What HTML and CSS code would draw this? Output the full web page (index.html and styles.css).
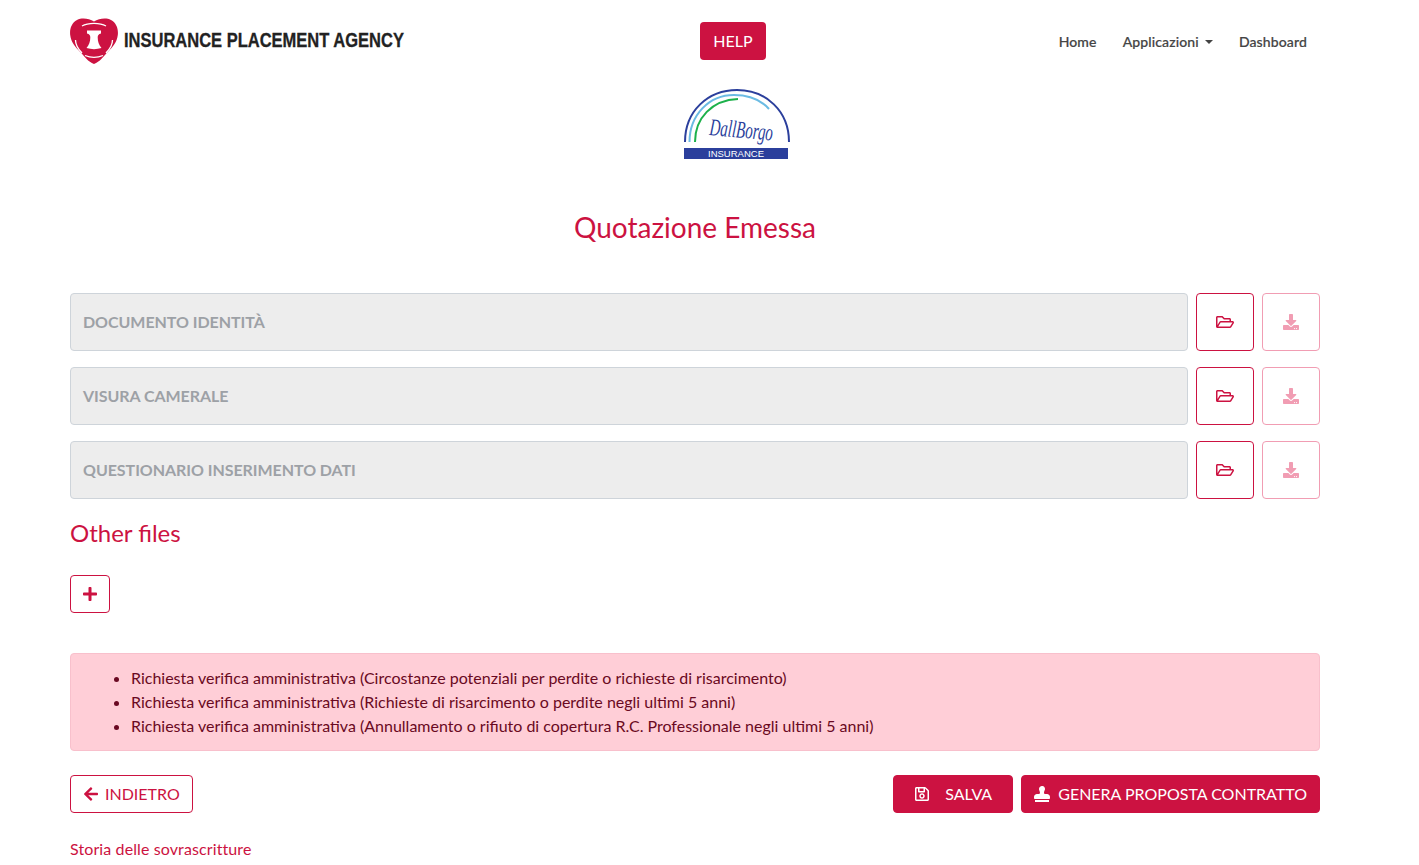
FILE: index.html
```html
<!DOCTYPE html>
<html lang="it">
<head>
<meta charset="utf-8">
<title>Quotazione Emessa</title>
<link rel="stylesheet" href="styles.css">
</head>
<body>
<svg class="defs" aria-hidden="true">
  <symbol id="i-folder" viewBox="0 0 576 512"><path d="M527.9 224H480v-48c0-26.5-21.5-48-48-48H272l-64-64H48C21.5 64 0 85.5 0 112v288c0 26.5 21.5 48 48 48h400c16.5 0 31.9-8.5 40.7-22.6l79.9-128c20-31.9-3-73.4-40.7-73.4zM48 118c0-3.3 2.7-6 6-6h134.1l64 64H426c3.3 0 6 2.7 6 6v42H152c-16.8 0-32.4 8.8-41.1 23.2L48 351.4zm400 282H72l77.2-128H528z"/></symbol>
  <symbol id="i-download" viewBox="0 0 512 512"><path d="M216 0h80c13.3 0 24 10.7 24 24v168h87.7c17.8 0 26.7 21.5 14.1 34.1L269.7 378.3c-7.5 7.5-19.8 7.5-27.3 0L90.1 226.1c-12.6-12.6-3.7-34.1 14.1-34.1H192V24c0-13.3 10.7-24 24-24zm296 376v112c0 13.3-10.7 24-24 24H24c-13.3 0-24-10.7-24-24V376c0-13.3 10.7-24 24-24h146.7l49 49c20.1 20.1 52.5 20.1 72.6 0l49-49H488c13.3 0 24 10.7 24 24zm-124 88c0-11-9-20-20-20s-20 9-20 20 9 20 20 20 20-9 20-20zm64 0c0-11-9-20-20-20s-20 9-20 20 9 20 20 20 20-9 20-20z"/></symbol>
  <symbol id="i-plus" viewBox="0 0 448 512"><path d="M416 208H272V64c0-17.67-14.33-32-32-32h-32c-17.67 0-32 14.33-32 32v144H32c-17.67 0-32 14.33-32 32v32c0 17.67 14.33 32 32 32h144v144c0 17.67 14.33 32 32 32h32c17.67 0 32-14.33 32-32V304h144c17.67 0 32-14.33 32-32v-32c0-17.67-14.33-32-32-32z"/></symbol>
  <symbol id="i-arrow" viewBox="0 0 448 512"><path d="M257.5 445.1l-22.2 22.2c-9.4 9.4-24.6 9.4-33.9 0L7 273c-9.4-9.4-9.4-24.6 0-33.9L201.4 44.7c9.4-9.4 24.6-9.4 33.9 0l22.2 22.2c9.5 9.5 9.3 25-.4 34.3L136.6 216H424c13.3 0 24 10.7 24 24v32c0 13.3-10.7 24-24 24H136.6l120.5 114.8c9.8 9.3 10 24.8.4 34.3z"/></symbol>
  <symbol id="i-save" viewBox="0 0 448 512"><path d="M433.941 129.941l-83.882-83.882A48 48 0 0 0 316.118 32H48C21.49 32 0 53.49 0 80v352c0 26.51 21.49 48 48 48h352c26.51 0 48-21.49 48-48V163.882a48 48 0 0 0-14.059-33.941zM272 80v80H144V80h128zm122 352H54a6 6 0 0 1-6-6V86a6 6 0 0 1 6-6h42v104c0 13.255 10.745 24 24 24h176c13.255 0 24-10.745 24-24V83.882l78.243 78.243a6 6 0 0 1 1.757 4.243V426a6 6 0 0 1-6 6zM224 232c-48.523 0-88 39.477-88 88s39.477 88 88 88 88-39.477 88-88-39.477-88-88-88zm0 128c-22.056 0-40-17.944-40-40s17.944-40 40-40 40 17.944 40 40-17.944 40-40 40z"/></symbol>
  <symbol id="i-stamp" viewBox="0 0 512 512"><path d="M32 512h448v-64H32v64zm384-256h-66.56c-16.26 0-29.44-13.18-29.44-29.44v-9.46c0-27.37 8.88-53.42 21.46-77.73 9.11-17.61 12.9-38.38 9.05-60.42-6.77-38.78-38.47-70.7-77.26-77.45C212.62-9.04 160 37.33 160 96c0 14.16 3.12 27.54 8.69 39.58C182.02 164.43 192 194.7 192 226.49v.07c0 16.26-13.18 29.44-29.44 29.44H96c-53.02 0-96 42.98-96 96v32c0 17.67 14.33 32 32 32h448c17.67 0 32-14.33 32-32v-32c0-53.02-42.98-96-96-96z"/></symbol>
</svg>

<div class="page">
  <header class="topbar">
    <a class="brand" href="#">
      <svg class="brand-mark" viewBox="0 0 48 46">
        <path class="mark-red" d="M24 3.500C19 .5 12 -.5 7 2 1.500 5 -.5 11 .2 17c.8 7 5 12 10 17 4 4 8 10 13.800 12 5.800-2 9.800-8 13.800-12 5-5 9.200-10 10-17 .7-6-1.300-12-6.800-15-5-2.500-12-1.500-17 1.500z"/>
        <path class="mark-white" d="M17 12.500h14v3c-2.500 .5-3.300 2-3.300 4 0 4 1.300 7.500 3.800 10.500-5 1.500-10 1.500-15 0 2.500-3 3.800-6.500 3.800-10.500 0-2-.8-3.500-3.300-4z"/>
        <path class="mark-line" d="M12 8c6-3.500 18-3.500 24 0M5.500 22c0 5 2.500 9 6.500 13M42.500 22c0 5-2.500 9-6.500 13M15 37.500c6 2.500 12 2.500 18 0"/>
      </svg>
      <span class="brand-name">INSURANCE PLACEMENT AGENCY</span>
    </a>
    <a class="help" href="#">HELP</a>
    <nav class="nav">
      <a href="#">Home</a>
      <a href="#" class="caret">Applicazioni</a>
      <a href="#">Dashboard</a>
    </nav>
  </header>

  <div class="partner">
    <svg class="partner-logo" viewBox="0 0 106 72">
      <path class="arc-blue" d="M1 54C1 23 24 2 53 2s52 21 52 52"/>
      <path class="arc-sky" d="M5.500 54C5.500 27 25 7 50 7c15 0 27 5 35 14"/>
      <path class="arc-green" d="M11 54C11 30 28 12 54 11"/>
      <text class="script" transform="translate(25 47) rotate(5) scale(1 1.600)">DallBorgo</text>
      <rect class="bar" x="0" y="60" width="104" height="11"/>
      <text class="bar-text" x="52" y="69" text-anchor="middle">INSURANCE</text>
    </svg>
  </div>

  <h1 class="title">Quotazione Emessa</h1>

  <section class="files">
    <div class="file-row">
      <div class="file-name">DOCUMENTO IDENTITÀ</div>
      <button class="square"><svg class="ic-folder"><use href="#i-folder"/></svg></button>
      <button class="square off"><svg class="ic-down"><use href="#i-download"/></svg></button>
    </div>
    <div class="file-row">
      <div class="file-name">VISURA CAMERALE</div>
      <button class="square"><svg class="ic-folder"><use href="#i-folder"/></svg></button>
      <button class="square off"><svg class="ic-down"><use href="#i-download"/></svg></button>
    </div>
    <div class="file-row">
      <div class="file-name">QUESTIONARIO INSERIMENTO DATI</div>
      <button class="square"><svg class="ic-folder"><use href="#i-folder"/></svg></button>
      <button class="square off"><svg class="ic-down"><use href="#i-download"/></svg></button>
    </div>
  </section>

  <h2 class="other">Other files</h2>
  <button class="add"><svg class="ic-plus"><use href="#i-plus"/></svg></button>

  <div class="alert">
    <ul>
      <li>Richiesta verifica amministrativa (Circostanze potenziali per perdite o richieste di risarcimento)</li>
      <li>Richiesta verifica amministrativa (Richieste di risarcimento o perdite negli ultimi 5 anni)</li>
      <li>Richiesta verifica amministrativa (Annullamento o rifiuto di copertura R.C. Professionale negli ultimi 5 anni)</li>
    </ul>
  </div>

  <div class="actions">
    <button class="btn outline"><svg class="ic-16"><use href="#i-arrow"/></svg>INDIETRO</button>
    <div class="actions-right">
      <button class="btn solid save"><svg class="ic-16"><use href="#i-save"/></svg>SALVA</button>
      <button class="btn solid gen"><svg class="ic-16"><use href="#i-stamp"/></svg>GENERA PROPOSTA CONTRATTO</button>
    </div>
  </div>

  <a class="history" href="#">Storia delle sovrascritture</a>
</div>
</body>
</html>
```

FILE: styles.css
```css
* { box-sizing: border-box; }
html, body { height: 100%; }
body {
  margin: 0;
  overflow: hidden;
  background: #fff;
  color: #212529;
  font-family: Lato, "Liberation Sans", sans-serif;
  font-size: 16px;
  line-height: 24px;
}
a { text-decoration: none; color: inherit; }
button { font-family: inherit; cursor: pointer; }
svg { fill: currentColor; }
.defs { display: none; }

.page { width: 1250px; margin-left: 70px; }

.topbar {
  height: 82px;
  display: grid;
  grid-template-columns: 630px 66px 1fr;
  align-items: start;
}
.brand { display: flex; align-items: center; gap: 6px; margin-top: 18px; height: 46px; }
.brand-mark { width: 48px; height: 46px; flex: none; }
.mark-red { fill: #cc1241; }
.mark-white { fill: #fff; }
.mark-line { fill: none; stroke: #fff; stroke-width: 1.300; }
.brand-name {
  display: inline-block;
  padding-bottom: 2px;
  font-family: "Liberation Sans", sans-serif;
  font-weight: 700;
  font-size: 20px;
  color: #222;
  white-space: nowrap;
  -webkit-text-stroke: .3px #222;
  transform: scaleX(.825);
  transform-origin: left center;
}
.help {
  margin-top: 22px;
  height: 38px;
  border-radius: 4px;
  background: #cc1241;
  color: #fff;
  text-align: center;
  line-height: 38px;
}
.nav {
  margin-top: 30px;
  display: flex;
  justify-content: flex-end;
  gap: 26px;
  padding-right: 13px;
  font-size: 14px;
  color: #444;
  letter-spacing: .13px;
}
.nav a { font-weight: 500; -webkit-text-stroke: .2px #444; }
.caret::after {
  content: "";
  display: inline-block;
  margin-left: 6px;
  vertical-align: 3px;
  border-top: 4px solid #444;
  border-left: 4px solid transparent;
  border-right: 4px solid transparent;
}

.partner { display: flex; justify-content: center; padding-left: 83px; height: 78px; }
.partner-logo { width: 106px; height: 72px; margin-top: 6px; }
.arc-blue, .arc-sky, .arc-green { fill: none; stroke-width: 2; }
.arc-blue { stroke: #2b3f9c; }
.arc-sky { stroke: #6bbbe3; }
.arc-green { stroke: #1db14b; }
.script {
  font-family: "Liberation Serif", serif;
  font-style: italic;
  font-size: 15px;
  fill: #2b3f9c;
}
.bar { fill: #2b3f9c; }
.bar-text { font-family: "Liberation Sans", sans-serif; font-size: 9.500px; fill: #fff; }

.title {
  margin: 0;
  padding-top: 50px;
  height: 133px;
  text-align: center;
  font-weight: 400;
  font-size: 28px;
  line-height: 34px;
  color: #cc1241;
}

.files { display: flex; flex-direction: column; gap: 16px; }
.file-row { display: flex; gap: 8px; height: 58px; }
.file-name {
  flex: 1;
  padding-left: 12px;
  line-height: 56px;
  background: #ededed;
  border: 1px solid #ced4da;
  border-radius: 4px;
  color: #9da1a6;
  font-weight: 700;
  letter-spacing: -.05px;
}
.square {
  width: 58px;
  padding: 0;
  display: flex;
  align-items: center;
  justify-content: center;
  background: #fff;
  border: 1px solid #cc1241;
  border-radius: 4px;
  color: #cc1241;
}
.square.off { border-color: #f19db3; color: #f19db3; }
.ic-folder { width: 18px; height: 16px; }
.ic-down { width: 16px; height: 16px; }

.other {
  margin: 16px 0 0;
  font-weight: 400;
  font-size: 24px;
  line-height: 35px;
  color: #cc1241;
}
.add {
  display: flex;
  align-items: center;
  justify-content: center;
  margin-top: 25px;
  width: 40px;
  height: 38px;
  padding: 0;
  background: #fff;
  border: 1px solid #cc1241;
  border-radius: 4px;
  color: #cc1241;
}
.ic-plus { width: 14px; height: 16px; }

.alert {
  margin-top: 40px;
  height: 98px;
  padding: 12px 20px;
  background: #ffced7;
  border: 1px solid #f8c0cc;
  border-radius: 4px;
  color: #6a0922;
}
.alert ul { margin: 0; padding-left: 40px; }

.actions { display: flex; justify-content: space-between; margin-top: 24px; }
.actions-right { display: flex; gap: 8px; }
.btn {
  display: flex;
  align-items: center;
  height: 38px;
  padding: 0 12px 2px;
  border-radius: 4px;
  font-size: 16px;
  border: 1px solid #cc1241;
}
.btn.outline { background: #fff; color: #cc1241; gap: 6px; }
.btn.solid { background: #cc1241; color: #fff; }
.save { gap: 15px; padding: 0 20px 2px; }
.gen { gap: 8px; }
.ic-16 { width: 16px; height: 16px; margin-top: 2px; }

.history {
  display: block;
  margin-top: 24px;
  color: #cc1241;
  letter-spacing: .11px;
}
```
